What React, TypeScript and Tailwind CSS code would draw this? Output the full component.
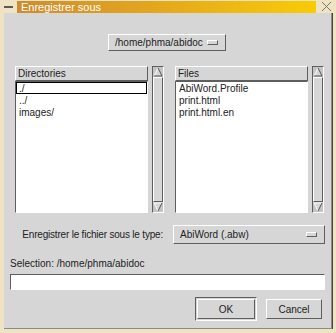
const raised = "border border-t-white border-l-white border-r-[#5e5e5e] border-b-[#5e5e5e]";
const sunken = "border border-t-[#5e5e5e] border-l-[#5e5e5e] border-r-white border-b-white";

function MenuMark() {
  return <div className={`h-[5px] w-[11px] bg-[#d6d6d6] ${raised}`} />;
}

function Arrow({ up }: { up?: boolean }) {
  return (
    <svg width="10" height="10" viewBox="0 0 10 10" className="shrink-0">
      {up ? (
        <>
          <path d="M1 9 L5 1 L9 9 Z" fill="#d6d6d6" />
          <path d="M1 9 L5 1" stroke="#ffffff" strokeWidth="1" />
          <path d="M5 1 L9 9 L1 9" stroke="#555" strokeWidth="1" fill="none" />
        </>
      ) : (
        <>
          <path d="M1 1 L5 9 L9 1 Z" fill="#d6d6d6" />
          <path d="M9 1 L1 1 L5 9" stroke="#ffffff" strokeWidth="1" fill="none" />
          <path d="M5 9 L9 1" stroke="#555" strokeWidth="1" />
        </>
      )}
    </svg>
  );
}

function ScrollBar() {
  return (
    <div className={`flex w-[12px] flex-col items-center bg-[#c4c4c4] ${sunken}`}>
      <Arrow up />
      <div className={`w-[10px] flex-1 bg-[#d6d6d6] ${raised}`} />
      <Arrow />
    </div>
  );
}

function FileList({ title, items, selected }: { title: string; items: string[]; selected?: number }) {
  return (
    <div className="flex w-[133px] flex-col">
      <div className={`h-[15px] bg-[#d6d6d6] pl-[2px] leading-[13px] ${raised}`}>{title}</div>
      <div className={`flex-1 bg-white ${sunken}`}>
        {items.map((t, i) => (
          <div
            key={t}
            className={`h-[12px] pl-[2px] leading-[11px] ${i === selected ? "border border-black" : "border border-transparent"}`}
          >
            {t}
          </div>
        ))}
      </div>
    </div>
  );
}

export default function App() {
  return (
    <div
      className="flex h-[333px] w-[336px] flex-col overflow-hidden bg-[#efe3c3] text-[10px] text-[#222]"
      style={{ fontFamily: '"Liberation Sans", Arial, sans-serif' }}
    >
      {/* title bar */}
      <div className="flex h-[13px] items-center">
        <div className="flex w-[17px] justify-center">
          <div className="h-[2px] w-[9px] bg-[#5a5a5a]" />
        </div>
        <div className="h-[12px] w-[299px] bg-gradient-to-r from-[#cf8b2e] via-[#e5aa1a] to-[#f8cc03] pl-[4px] text-[11px] leading-[12px] text-white">
          Enregistrer sous
        </div>
        <div className="flex flex-1 justify-center">
          <svg width="11" height="11" viewBox="0 0 11 11">
            <path d="M1 1 L10 10 M10 1 L1 10" stroke="#777" strokeWidth="1" />
          </svg>
        </div>
      </div>

      <div className="flex flex-1">
        <div className="w-[4px]" />
        <div className="flex w-[328px] flex-col border-b border-r border-[#8a8a8a] bg-[#d6d6d6]">
          {/* path option menu */}
          <div className={`ml-[104px] mt-[21px] flex h-[17px] w-[118px] items-center justify-between bg-[#d6d6d6] pl-[6px] pr-[7px] ${raised}`}>
            <span>/home/phma/abidoc</span>
            <MenuMark />
          </div>

          {/* lists */}
          <div className="ml-[11px] mt-[15px] flex h-[147px]">
            <FileList title="Directories" items={["./", "../", "images/"]} selected={0} />
            <div className="ml-[4px] flex">
              <ScrollBar />
            </div>
            <div className="ml-[11px] flex">
              <FileList title="Files" items={["AbiWord.Profile", "print.html", "print.html.en"]} />
            </div>
            <div className="ml-[4px] flex">
              <ScrollBar />
            </div>
          </div>

          {/* type */}
          <div className="mt-[12px] flex h-[19px] items-center">
            <div className="w-[161px] pr-[2px] text-right tracking-[-0.2px]">Enregistrer le fichier sous le type:</div>
            <div className={`ml-[8px] flex h-[19px] w-[152px] items-center justify-between pl-[6px] pr-[7px] ${raised}`}>
              <span>AbiWord (.abw)</span>
              <MenuMark />
            </div>
          </div>

          <div className="ml-[6px] mt-[14px] h-[12px] leading-[12px]">Selection: /home/phma/abidoc</div>
          <div className={`ml-[6px] mt-[4px] h-[16px] w-[315px] bg-white ${sunken}`} />

          {/* buttons */}
          <div className="ml-[191px] mt-[7px] flex items-center">
            <div className={`flex h-[24px] w-[62px] items-center justify-center p-[1px] ${sunken}`}>
              <div className={`flex h-full w-full items-center justify-center ${raised}`}>OK</div>
            </div>
            <div className={`ml-[9px] flex h-[20px] w-[56px] items-center justify-center ${raised}`}>Cancel</div>
          </div>
        </div>
        <div className="w-[1px] bg-[#444]" />
      </div>
      <div className="h-[4px]" />
    </div>
  );
}
